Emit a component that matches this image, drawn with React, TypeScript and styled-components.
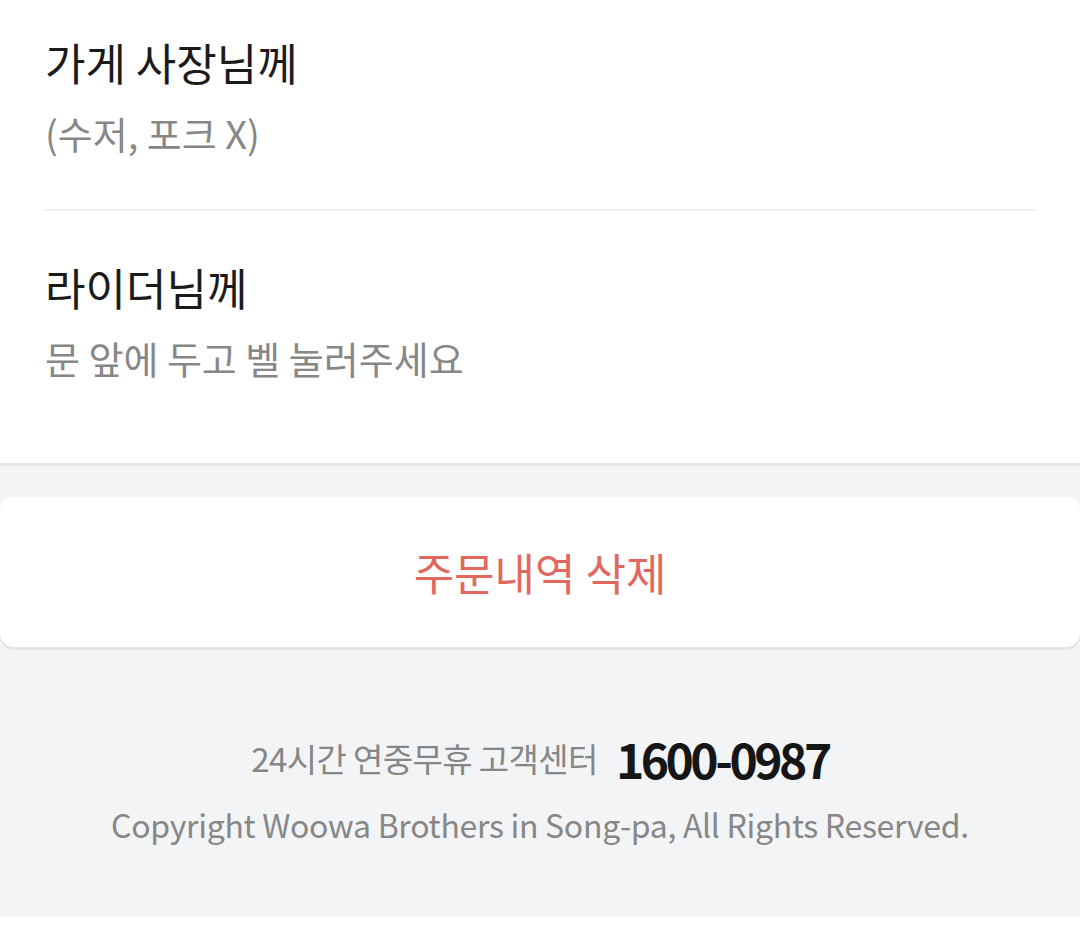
import styled, { createGlobalStyle } from "styled-components";

const GlobalStyle = createGlobalStyle`
  body {
    margin: 0;
    background: #ffffff;
    font-family: "Noto Sans CJK KR", "Noto Sans", sans-serif;
  }
`;

const Page = styled.div`
  width: 1080px;
  background: #ffffff;
`;

const RequestSection = styled.section`
  background: #ffffff;
  padding: 34px 45px 0;
  height: 429px;
  box-sizing: content-box;
  border-bottom: 3px solid #e6e7e9;
`;

const Request = styled.div<{ last?: boolean }>`
  padding-bottom: ${(props) => (props.last ? "0" : "51px")};
  margin-top: ${(props) => (props.last ? "48px" : "0")};
`;

const Title = styled.h3`
  margin: 0;
  font-size: 44px;
  line-height: 56px;
  font-weight: 400;
  color: #1b1b1b;
`;

const Desc = styled.p`
  margin: 18px 0 0;
  font-size: 38px;
  line-height: 50px;
  font-weight: 400;
  color: #878787;
`;

const Divider = styled.hr`
  margin: 0;
  border: none;
  height: 2px;
  background: #eef0f0;
`;

const GreyArea = styled.div`
  background: #f3f4f6;
  padding: 31px 0 0;
  height: 420px;
  box-sizing: content-box;
`;

const DeleteButton = styled.button`
  display: flex;
  align-items: center;
  justify-content: center;
  width: 100%;
  height: 150px;
  border: none;
  border-radius: 14px;
  background: #ffffff;
  box-shadow: 0 3px 0 #e4e5e7;
  font-family: inherit;
  font-size: 44px;
  font-weight: 400;
  color: #e0685f;
  cursor: pointer;
`;

const Footer = styled.footer`
  display: flex;
  flex-direction: column;
  align-items: center;
  padding-top: 76px;
`;

const CallRow = styled.div`
  display: flex;
  align-items: center;
  gap: 18px;
`;

const CallLabel = styled.span`
  font-size: 33px;
  color: #868686;
  letter-spacing: -0.6px;
`;

const CallNumber = styled.span`
  font-size: 48px;
  font-weight: 700;
  color: #161616;
  letter-spacing: -3.5px;
`;

const Copyright = styled.p`
  margin: 8px 0 0;
  font-size: 32px;
  color: #878787;
  letter-spacing: -0.3px;
`;

function App() {
  return (
    <Page>
      <GlobalStyle />
      <RequestSection>
        <Request>
          <Title>가게 사장님께</Title>
          <Desc>(수저, 포크 X)</Desc>
        </Request>
        <Divider />
        <Request last>
          <Title>라이더님께</Title>
          <Desc>문 앞에 두고 벨 눌러주세요</Desc>
        </Request>
      </RequestSection>
      <GreyArea>
        <DeleteButton>주문내역 삭제</DeleteButton>
        <Footer>
          <CallRow>
            <CallLabel>24시간 연중무휴 고객센터</CallLabel>
            <CallNumber>1600-0987</CallNumber>
          </CallRow>
          <Copyright>Copyright Woowa Brothers in Song-pa, All Rights Reserved.</Copyright>
        </Footer>
      </GreyArea>
    </Page>
  );
}

export default App;
